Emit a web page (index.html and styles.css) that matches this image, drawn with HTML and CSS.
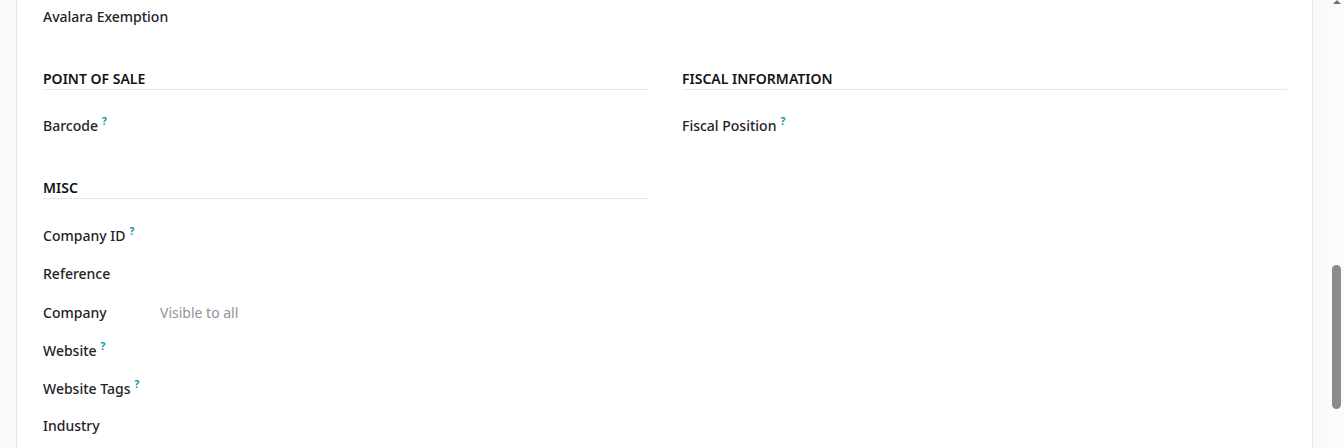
FILE: index.html
```html
<!DOCTYPE html>
<html>
<head>
<meta charset="utf-8">
<link rel="stylesheet" href="styles.css">
</head>
<body>
<div class="page">
  <div class="gutter-left"></div>
  <div class="sheet">
    <div class="content">
      <div class="row"><span class="label">Avalara Exemption</span></div>
      <div class="columns">
        <div class="col">
          <div class="group">
            <div class="group-title">POINT OF SALE</div>
            <div class="row"><span class="label">Barcode<sup class="help">?</sup></span></div>
          </div>
          <div class="group">
            <div class="group-title">MISC</div>
            <div class="row"><span class="label">Company ID<sup class="help">?</sup></span></div>
            <div class="row"><span class="label">Reference</span></div>
            <div class="row"><span class="label">Company</span><span class="placeholder">Visible to all</span></div>
            <div class="row"><span class="label">Website<sup class="help">?</sup></span></div>
            <div class="row row-tags"><span class="label">Website Tags<sup class="help">?</sup></span></div>
            <div class="row"><span class="label">Industry</span></div>
          </div>
        </div>
        <div class="col">
          <div class="group">
            <div class="group-title">FISCAL INFORMATION</div>
            <div class="row"><span class="label">Fiscal Position<sup class="help">?</sup></span></div>
          </div>
        </div>
      </div>
    </div>
  </div>
  <div class="gutter-right">
    <div class="scroll-arrow"></div>
    <div class="scroll-thumb"></div>
  </div>
</div>
</body>
</html>
```
FILE: styles.css
```css
html, body {
  margin: 0;
  padding: 0;
  height: 100%;
  overflow: hidden;
}
body {
  background: #f8f9fa;
  font-family: "Noto Sans", "Open Sans", sans-serif;
  font-size: 14px;
  color: #1f2328;
}
.page {
  display: flex;
  height: 448px;
}
.gutter-left {
  width: 16px;
  flex: none;
  background: #f8f9fa;
}
.sheet {
  flex: 1;
  background: #fff;
  border-left: 1px solid #e5e7eb;
  border-right: 1px solid #e5e7eb;
  overflow: hidden;
}
.content {
  margin-top: -3px;
  padding: 0 25px 0 26px;
}
.row {
  height: 38.5px;
  display: flex;
  align-items: center;
}
.row-tags {
  height: 36.5px;
}
.label {
  width: 117px;
  flex: none;
  font-weight: 500;
  color: #1f2328;
  white-space: nowrap;
}
.help {
  color: #0f8fa3;
  font-size: 10px;
  font-weight: 700;
  margin-left: 4px;
  vertical-align: 6px;
  line-height: 0;
}
.placeholder {
  color: #8f9499;
}
.columns {
  display: flex;
  gap: 34px;
}
.col {
  flex: 1;
  min-width: 0;
}
.group {
  margin-top: 32px;
}
.group-title {
  font-weight: 600;
  line-height: 21px;
  border-bottom: 1px solid #e6e8ea;
  margin-bottom: 17px;
  color: #111418;
}
.gutter-right {
  width: 31px;
  flex: none;
  display: flex;
  flex-direction: column;
  align-items: flex-end;
  padding-right: 3px;
  box-sizing: border-box;
  background: linear-gradient(to right, #f8f9fa 0, #f8f9fa 16px, #fbfbfb 16px);
}
.scroll-arrow {
  width: 0;
  height: 0;
  border-left: 4px solid transparent;
  border-right: 4px solid transparent;
  border-bottom: 4px solid #707070;
}
.scroll-thumb {
  margin-top: 261px;
  width: 9px;
  height: 144px;
  border-radius: 5px;
  background: #8b8b8b;
}
```
